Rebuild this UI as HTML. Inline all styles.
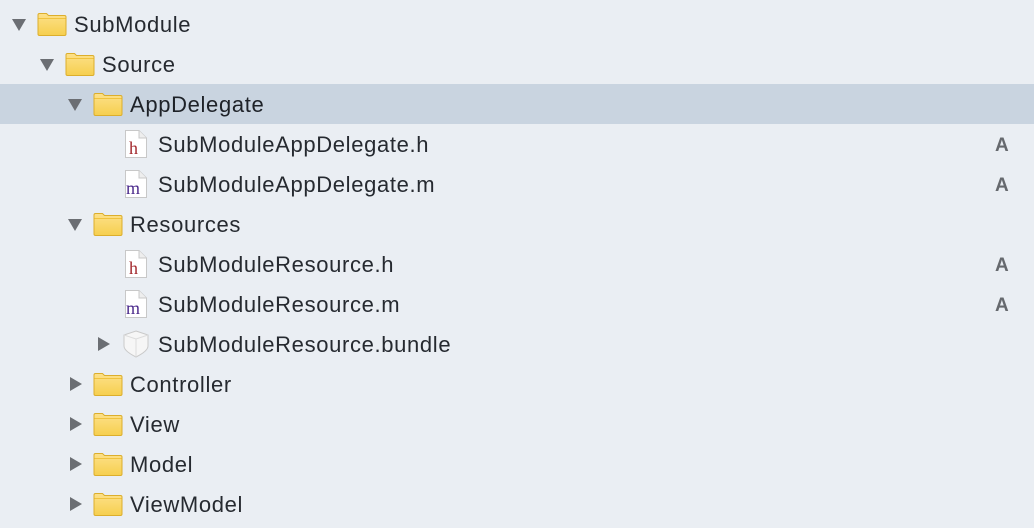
<!DOCTYPE html>
<html><head><meta charset="utf-8"><style>
html,body{margin:0;padding:0}
body{width:1034px;height:528px;background:#eaeef3;position:relative;overflow:hidden;font-family:"Liberation Sans",sans-serif;}
.sel{position:absolute;left:0;top:84px;width:1034px;height:40px;background:#c9d4e0}
.r{position:absolute;height:40px;left:0;width:1034px}
.t{position:absolute;top:8px;font-size:22px;color:#262a30;white-space:nowrap;letter-spacing:0.65px}
.tri{position:absolute}
.ic{position:absolute}
.a{position:absolute;left:995px;top:11px;font-size:19px;font-weight:bold;color:#66696e}
</style></head><body>
<svg width="0" height="0" style="position:absolute">
<defs>
<linearGradient id="fg" x1="0" y1="0" x2="0" y2="1"><stop offset="0" stop-color="#fde18a"/><stop offset="1" stop-color="#f6cf4e"/></linearGradient>
<symbol id="folder" viewBox="0 0 30 26"><path d="M1 4.5 Q1 3 2.5 3 H9.5 L11.5 5 H27.5 Q29 5 29 6.5 V23.5 Q29 25 27.5 25 H2.5 Q1 25 1 23.5 Z" fill="url(#fg)" stroke="#dcae2c" stroke-width="1"/><path d="M1.5 8 H28.5" stroke="#f0c23e" stroke-width="1"/></symbol>
<symbol id="down" viewBox="0 0 16 14"><path d="M1 1 H15 L8 13 Z" fill="#6b6e73"/></symbol>
<symbol id="right" viewBox="0 0 14 16"><path d="M1 1 V15 L13 8 Z" fill="#6b6e73"/></symbol>
<symbol id="file" viewBox="0 0 24 30"><path d="M1.5 1.5 H15 L22.5 9 V28.5 H1.5 Z" fill="#fff" stroke="#c8c8c8"/><path d="M15 1.5 V9 H22.5" fill="#eee" stroke="#c8c8c8"/></symbol>
</defs></svg>
<div class="sel"></div>

<div class="r" style="top:4px"><svg class="tri" style="left:11px;top:14px" width="16" height="14"><use href="#down"/></svg><svg class="ic" style="left:37px;top:6px" width="30" height="27"><use href="#folder"/></svg><div class="t" style="left:74px">SubModule</div></div>

<div class="r" style="top:44px"><svg class="tri" style="left:39px;top:14px" width="16" height="14"><use href="#down"/></svg><svg class="ic" style="left:65px;top:6px" width="30" height="27"><use href="#folder"/></svg><div class="t" style="left:102px">Source</div></div>

<div class="r" style="top:84px"><svg class="tri" style="left:67px;top:14px" width="16" height="14"><use href="#down"/></svg><svg class="ic" style="left:93px;top:6px" width="30" height="27"><use href="#folder"/></svg><div class="t" style="left:130px;color:#1e2228">AppDelegate</div></div>

<div class="r" style="top:124px"><svg class="ic" style="left:124px;top:5px" width="24" height="30"><use href="#file"/><text x="5" y="25" font-family="Liberation Serif,serif" font-size="18" fill="#a3282d">h</text></svg><div class="t" style="left:158px">SubModuleAppDelegate.h</div><div class="a">A</div></div>

<div class="r" style="top:164px"><svg class="ic" style="left:124px;top:5px" width="24" height="30"><use href="#file"/><text x="2" y="25" font-family="Liberation Serif,serif" font-size="18" fill="#4b2a8c">m</text></svg><div class="t" style="left:158px">SubModuleAppDelegate.m</div><div class="a">A</div></div>

<div class="r" style="top:204px"><svg class="tri" style="left:67px;top:14px" width="16" height="14"><use href="#down"/></svg><svg class="ic" style="left:93px;top:6px" width="30" height="27"><use href="#folder"/></svg><div class="t" style="left:130px">Resources</div></div>

<div class="r" style="top:244px"><svg class="ic" style="left:124px;top:5px" width="24" height="30"><use href="#file"/><text x="5" y="25" font-family="Liberation Serif,serif" font-size="18" fill="#a3282d">h</text></svg><div class="t" style="left:158px">SubModuleResource.h</div><div class="a">A</div></div>

<div class="r" style="top:284px"><svg class="ic" style="left:124px;top:5px" width="24" height="30"><use href="#file"/><text x="2" y="25" font-family="Liberation Serif,serif" font-size="18" fill="#4b2a8c">m</text></svg><div class="t" style="left:158px">SubModuleResource.m</div><div class="a">A</div></div>

<div class="r" style="top:324px"><svg class="tri" style="left:97px;top:12px" width="14" height="16"><use href="#right"/></svg><svg class="ic" style="left:121px;top:5px" width="30" height="30" viewBox="0 0 30 30"><path d="M15 2 L27 6 V17 Q27 22 15 28 Q3 22 3 17 V6 Z" fill="#f6f6f6" stroke="#c9c9c9"/><path d="M3 6 L15 10 L27 6 M15 10 V28" fill="none" stroke="#dcdcdc"/></svg><div class="t" style="left:158px">SubModuleResource.bundle</div></div>

<div class="r" style="top:364px"><svg class="tri" style="left:69px;top:12px" width="14" height="16"><use href="#right"/></svg><svg class="ic" style="left:93px;top:6px" width="30" height="27"><use href="#folder"/></svg><div class="t" style="left:130px">Controller</div></div>

<div class="r" style="top:404px"><svg class="tri" style="left:69px;top:12px" width="14" height="16"><use href="#right"/></svg><svg class="ic" style="left:93px;top:6px" width="30" height="27"><use href="#folder"/></svg><div class="t" style="left:130px">View</div></div>

<div class="r" style="top:444px"><svg class="tri" style="left:69px;top:12px" width="14" height="16"><use href="#right"/></svg><svg class="ic" style="left:93px;top:6px" width="30" height="27"><use href="#folder"/></svg><div class="t" style="left:130px">Model</div></div>

<div class="r" style="top:484px"><svg class="tri" style="left:69px;top:12px" width="14" height="16"><use href="#right"/></svg><svg class="ic" style="left:93px;top:6px" width="30" height="27"><use href="#folder"/></svg><div class="t" style="left:130px">ViewModel</div></div>
</body></html>
